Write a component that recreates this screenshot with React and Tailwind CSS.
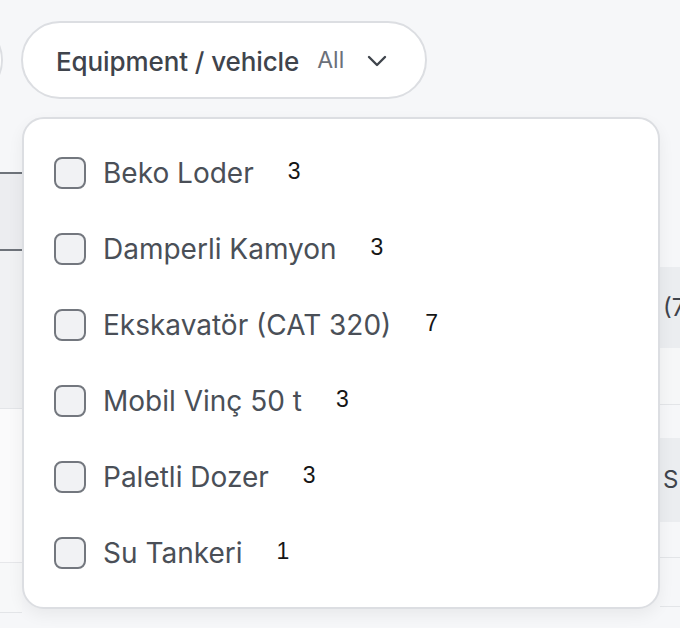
import React from 'react';

const items = [
  { label: 'Beko Loder', count: 3 },
  { label: 'Damperli Kamyon', count: 3 },
  { label: 'Ekskavatör (CAT 320)', count: 7 },
  { label: 'Mobil Vinç 50 t', count: 3 },
  { label: 'Paletli Dozer', count: 3 },
  { label: 'Su Tankeri', count: 1 },
];

const Chevron = () => (
  <svg width="20" height="12" viewBox="0 0 20 12" fill="none" className="shrink-0">
    <polyline points="2,2 10,10 18,2" stroke="#3f444c" strokeWidth="2.4" strokeLinecap="round" strokeLinejoin="round" />
  </svg>
);

const FilterDropdown = () => (
  <div className="absolute left-[1px] top-[calc(100%+18px)] w-[638px] rounded-[22px] border-2 border-[#dcdee2] bg-white py-[16px] shadow-[0_6px_16px_rgba(0,0,0,0.06)] z-10">
    {items.map((item) => (
      <label key={item.label} className="flex h-[76px] items-center pl-[30px]">
        <span className="h-[32px] w-[32px] shrink-0 rounded-[8px] border-2 border-[#73777e] bg-[#f1f2f4]" />
        <span className="ml-[17px] text-[28px] leading-none text-[#4a4f57]">{item.label}</span>
        <span className="ml-[34px] font-['Liberation_Sans',Arial,sans-serif] text-[23px] leading-none text-[#151515] -translate-y-[2px]">
          {item.count}
        </span>
      </label>
    ))}
  </div>
);

export default function App() {
  return (
    <div className="h-[628px] w-[680px] overflow-hidden bg-[#f6f7f9] font-['Inter',sans-serif]">
      {/* Filter bar */}
      <div className="flex items-start gap-[18px] pt-[21px]">
        <div className="ml-[-97px] h-[78px] w-[100px] shrink-0 rounded-full border-2 border-[#dcdee2] bg-white" />
        <div className="relative shrink-0">
          <button className="flex h-[78px] w-[406px] items-center rounded-full border-2 border-[#dcdee2] bg-white pl-[33px]">
            <span className="text-[26px] font-medium tracking-[-0.1px] text-[#3f444c] translate-y-[1px]">Equipment / vehicle</span>
            <span className="ml-[18px] text-[23px] text-[#6b7079]">All</span>
            <span className="ml-[23px] translate-y-[1px]">
              <Chevron />
            </span>
          </button>
          <FilterDropdown />
        </div>
      </div>

      {/* Table behind the dropdown */}
      <div className="mt-[18px] flex justify-between">
        <div className="w-[22px] overflow-hidden">
          <div className="h-[55px]" />
          <div className="flex h-[79px] items-center justify-end border-y-2 border-[#6e737a] bg-[#ecedf0] text-[24px] text-[#2d3138]">
            <span className="-mr-[20px]">l</span>
          </div>
          <div className="h-[158px] border-b border-[#e3e5e8] bg-[#f0f1f3]" />
          <div className="h-[154px] border-b border-[#e6e7ea] bg-[#fafafb]" />
          <div className="h-[50px] border-b border-[#e3e5e8] bg-[#f7f8f9]" />
        </div>
        <div className="w-[20px] overflow-hidden">
          <div className="h-[150px]" />
          <div className="flex h-[81px] items-center bg-[#ebedf0] pl-[3px] text-[24px] text-[#3f444c] whitespace-nowrap">(7</div>
          <div className="h-[57px] border-b border-[#e3e5e8] bg-[#f6f7f8]" />
          <div className="h-[33px]" />
          <div className="flex h-[84px] items-center bg-[#ebedf0] pl-[3px] text-[24px] text-[#3f444c] whitespace-nowrap">S</div>
          <div className="h-[36px] border-b border-[#e3e5e8]" />
          <div className="h-[49px] border-b border-[#e3e5e8]" />
        </div>
      </div>
    </div>
  );
}
